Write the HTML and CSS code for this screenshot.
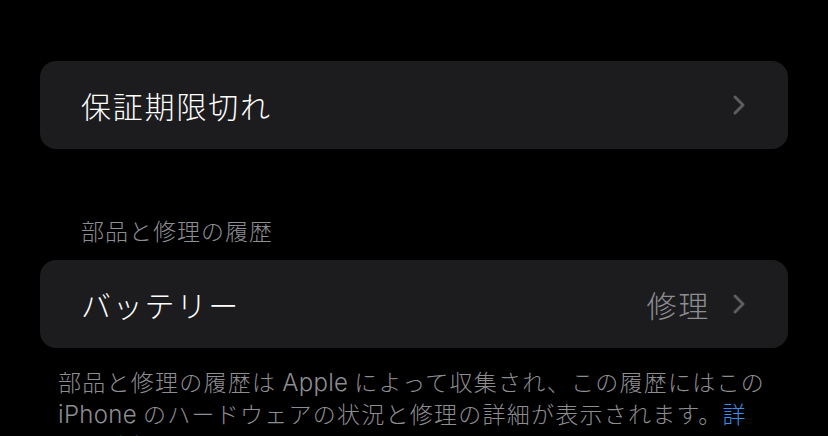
FILE: index.html
```html
<!DOCTYPE html>
<html lang="ja">
<head>
<meta charset="utf-8">
<link rel="stylesheet" href="styles.css">
</head>
<body>
<main class="page">
  <div class="card">
    <span class="label">保証期限切れ</span>
    <span class="trail">
      <svg class="chev" viewBox="0 0 14 22" width="14" height="22"><path d="M3 3 L11 11 L3 19" fill="none" stroke="#5c5c61" stroke-width="3" stroke-linecap="round" stroke-linejoin="round"/></svg>
    </span>
  </div>

  <div class="section-header">部品と修理の履歴</div>

  <div class="card">
    <span class="label">バッテリー</span>
    <span class="trail">
      <span class="value">修理</span>
      <svg class="chev" viewBox="0 0 14 22" width="14" height="22"><path d="M3 3 L11 11 L3 19" fill="none" stroke="#5c5c61" stroke-width="3" stroke-linecap="round" stroke-linejoin="round"/></svg>
    </span>
  </div>

  <p class="footer">部品と修理の履歴は<span class="latin">Apple</span>によって収集され、この履歴にはこの<span class="latin first">iPhone</span>のハードウェアの状況と修理の詳細が表示されます。<a class="link" href="#">詳しい情報...</a></p>
</main>
</body>
</html>
```

FILE: styles.css
```css
html, body {
  margin: 0;
  padding: 0;
  background: #000;
  height: 436px;
  overflow: hidden;
}
body {
  font-family: "Noto Sans CJK JP", "Noto Sans", sans-serif;
  font-weight: 300;
  color: #fff;
}
.page {
  padding: 61px 40px 0;
}
.card {
  height: 88px;
  background: #1c1c1e;
  border-radius: 16px;
  display: flex;
  align-items: center;
  justify-content: space-between;
  padding: 0 42px 0 41px;
}
.label {
  font-size: 30px;
  letter-spacing: 1.8px;
  line-height: 1;
}
.trail {
  display: flex;
  align-items: center;
  gap: 22px;
}
.value {
  font-size: 30px;
  letter-spacing: 1.8px;
  color: #8d8d92;
  line-height: 1;
}
.chev {
  display: block;
}
.section-header {
  margin: 66px 0 15px;
  padding-left: 41px;
  font-size: 23px;
  letter-spacing: 1px;
  line-height: 30px;
  color: #8d8d92;
}
.footer {
  margin: 18px 0 0;
  padding: 0 18px;
  font-size: 23px;
  line-height: 30px;
  letter-spacing: 1.25px;
  color: #8d8d92;
}
.latin {
  font-family: "Inter", "Noto Sans", sans-serif;
  font-size: 24px;
  margin: 0 6px;
  letter-spacing: 0.3px;
}
.latin.first {
  margin-left: 0;
}
.link {
  color: #3b8eef;
  text-decoration: none;
}
```
